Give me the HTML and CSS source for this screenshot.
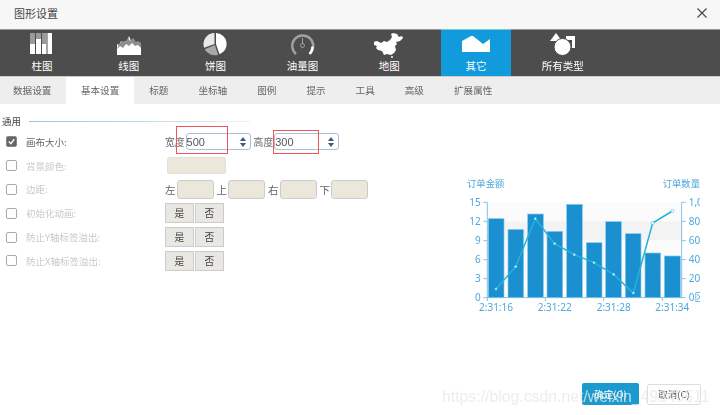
FILE: index.html
```html
<!DOCTYPE html>
<html lang="zh">
<head>
<meta charset="utf-8">
<title>图形设置</title>
<link rel="stylesheet" href="styles.css">
</head>
<body>
<div class="page">
  <header class="head"><span class="head-title">图形设置</span><svg class="close" viewBox="0 0 10 10"><path d="M.5.5l9 9M9.500.5l-9 9"/></svg></header>
  <nav class="types">
    <div class="type"><svg class="ti" viewBox="0 0 30 26"><path fill="#fff" d="M3 1h5v21H3zM9 1h5v21H9zM15 1h4.500v21H15zM20.500 1H25v21h-4.500z"/><path fill="#9a9a9a" d="M3 1h5v11H3zM9 1h5v6H9zM15 1h4.500v11H15z"/></svg><span>柱图</span></div>
    <div class="type"><svg class="ti" viewBox="0 0 30 26"><path fill="#fff" d="M3 23V12l2 1 2-4 2 3 2-3 2 1 2-6 2 5 2-2 2 4 2-1 2 3 2-1v11z"/><path fill="#8f8f8f" d="M3 17l3-3 3 2 3-4 3 2 3-3 3 3 3-1 3 3v-5l-3-2-2 1-3-4-3 3-2-3-3 4-3-1-3 3z"/></svg><span>线图</span></div>
    <div class="type"><svg class="ti" viewBox="0 0 30 26"><path fill="#fff" d="M15 1a11 11 0 0 1 3.500 21.300L15 12z"/><path fill="#a8a8a8" d="M13.800 13l3.400 9.700a11 11 0 0 1-13.500-5.400z"/><path fill="#e8e8e8" d="M13.500 1v11L3.100 15.700A11 11 0 0 1 13.500 1z"/></svg><span>饼图</span></div>
    <div class="type"><svg class="ti" viewBox="0 0 30 26"><path fill="none" stroke="#a0a0a0" stroke-width="2.400" d="M9 22a10.500 10.500 0 1 1 14 -.5"/><path fill="none" stroke="#fff" stroke-width="2.400" d="M25.500 14.500a10.500 10.500 0 0 1-3 7.500"/><circle cx="15.500" cy="13.500" r="2" fill="none" stroke="#a0a0a0"/><path stroke="#a0a0a0" d="M15.500 6v6"/></svg><span>油量图</span></div>
    <div class="type"><svg class="ti" viewBox="0 0 30 26"><path fill="#fff" d="M23 2l2 3 3-1 1 2-3 3-4 1 1 2-2 2 1 4-2 3-3 2-4-1-3 1-2-4-4-1-2-2 1-2-3-1-1-3 4-1 4 2 3-2 3 1 3-2 2-3-1-3 2-1z"/><circle cx="18" cy="25" r="1" fill="#fff"/></svg><span>地图</span></div>
    <div class="type active"><svg class="ti" viewBox="0 0 30 26"><path fill="#fff" d="M1 9L10 4h2l10 8 7-5v13H1z"/></svg><span>其它</span></div>
    <div class="type"><svg class="ti" viewBox="0 0 30 26"><path fill="#fff" d="M2 9l6-8 6 8zM18 4h9v12h-3V8h-6z"/><circle cx="14.500" cy="15" r="8.500" fill="#fff" stroke="#4d4d4d"/></svg><span>所有类型</span></div>
  </nav>
  <nav class="tabs">
    <span class="tab first">数据设置</span><span class="tab on">基本设置</span><span class="tab">标题</span><span class="tab">坐标轴</span><span class="tab">图例</span><span class="tab">提示</span><span class="tab">工具</span><span class="tab">高级</span><span class="tab">扩展属性</span>
  </nav>
  <main class="body">
    <section class="form">
      <div class="section"><b>通用</b><i></i></div>
      <div class="row"><span class="check on"><svg viewBox="0 0 10 10"><path d="M2 5l2.300 2.500L8 2.500"/></svg></span><label class="lbl dark">画布大小:</label>
        <div class="ctrl"><span>宽度</span><span class="spin"><em>500</em><u></u></span><span class="sp2">高度</span><span class="spin"><em>300</em><u></u></span></div></div>
      <div class="row"><span class="check"></span><label class="lbl">背景颜色:</label><div class="ctrl"><span class="color"></span></div></div>
      <div class="row"><span class="check"></span><label class="lbl">边距:</label><div class="ctrl gap3"><span>左</span><span class="num"></span><span>上</span><span class="num"></span><span>右</span><span class="num"></span><span>下</span><span class="num"></span></div></div>
      <div class="row"><span class="check"></span><label class="lbl">初始化动画:</label><div class="ctrl seg"><span>是</span><span>否</span></div></div>
      <div class="row"><span class="check"></span><label class="lbl">防止Y轴标签溢出:</label><div class="ctrl seg"><span>是</span><span>否</span></div></div>
      <div class="row"><span class="check"></span><label class="lbl">防止X轴标签溢出:</label><div class="ctrl seg"><span>是</span><span>否</span></div></div>
    </section>
    <svg class="chart" viewBox="0 0 750 450">
      <g class="bands"><rect x="112" y="97" width="583" height="57" fill="#fbfbfb"/><rect x="112" y="154" width="583" height="58" fill="#f3f3f3"/><rect x="112" y="212" width="583" height="57" fill="#fbfbfb"/><rect x="112" y="269" width="583" height="57" fill="#f8f8f8"/><rect x="112" y="326" width="583" height="57" fill="#fdfdfd"/></g>
      <g class="bars"><rect x="115" y="146" width="47" height="237"/><rect x="174" y="178" width="47" height="205"/><rect x="233" y="132" width="47" height="251"/><rect x="291" y="184" width="47" height="199"/><rect x="350" y="103" width="47" height="280"/><rect x="409" y="218" width="47" height="165"/><rect x="467" y="155" width="47" height="228"/><rect x="526" y="191" width="47" height="192"/><rect x="585" y="249" width="47" height="134"/><rect x="643" y="258" width="48" height="125"/></g>
      <polyline class="line" points="138,357 197,290 256,146 314,221 373,254 432,278 491,313 550,369 608,159 667,123"/>
      <g class="dots"><circle cx="138" cy="357" r="3.500"/><circle cx="197" cy="290" r="3.500"/><circle cx="256" cy="146" r="3.500"/><circle cx="314" cy="221" r="3.500"/><circle cx="373" cy="254" r="3.500"/><circle cx="432" cy="278" r="3.500"/><circle cx="491" cy="313" r="3.500"/><circle cx="550" cy="369" r="3.500"/><circle cx="608" cy="159" r="4.500"/><circle cx="667" cy="123" r="4.500"/></g>
      <path class="axis" d="M112 97v286M695 97v286M100 383h606M100 97h12M100 154h12M100 212h12M100 269h12M100 326h12M695 97h12M695 154h12M695 212h12M695 269h12M695 326h12M112 383v10M286 383v10M461 383v10M637 383v10"/>
      <g class="ct"><text x="51" y="52">订单金额</text><text x="638" y="52">订单数量</text></g>
      <g class="yl"><text x="92" y="107">15</text><text x="92" y="164">12</text><text x="92" y="221">9</text><text x="92" y="279">6</text><text x="92" y="336">3</text><text x="92" y="393">0</text></g>
      <g class="yr"><text x="716" y="107">1,000</text><text x="716" y="164">800</text><text x="716" y="221">600</text><text x="716" y="279">400</text><text x="716" y="336">200</text><text x="716" y="393">0区</text></g>
      <g class="xl"><text x="138" y="423">2:31:16</text><text x="314" y="423">2:31:22</text><text x="491" y="423">2:31:28</text><text x="667" y="423">2:31:34</text></g>
    </svg>
  </main>
  <footer class="foot"><span class="ok">确定(O)</span><span class="no">取消(C)</span></footer>
  <div class="mark m1"></div>
  <div class="mark m2"></div>
  <div class="wm">https://blog.csdn.net/weixin_49340511</div>
</div>
</body>
</html>
```
FILE: styles.css
```css
*{box-sizing:border-box}
html,body{margin:0;padding:0;background:#fff}
.page{position:relative;width:720px;height:415px;overflow:hidden;font-family:"Noto Sans CJK SC","Noto Sans",sans-serif;font-size:10px;color:#555;filter:blur(.35px)}
.head{height:29px;background:#f7f7f7;display:flex;align-items:center;justify-content:space-between;padding:0 13px 4px 14px}
.head-title{font-size:11px;color:#444}
.close{width:10px;height:10px;stroke:#444;stroke-width:1.100;fill:none}
.types{height:48px;background:#4d4d4d;border-top:1px solid #999;border-bottom:1px solid #ccc;display:flex;gap:16.8px;padding-left:7px}
.type{width:70px;display:flex;flex-direction:column;align-items:center;color:#fff;font-size:10.500px;line-height:13px}
.type.active{background:#119bdc;border-top:1px solid #7cc;margin-top:-1px;height:47px}
.ti{width:30px;height:26px;margin:2px 0 1px;flex:none}
.tabs{height:27px;background:#eee;display:flex;align-items:center}
.tab{padding:0 15px;line-height:26px;height:27px;font-size:9.600px;color:#666;white-space:nowrap}
.tab.first{padding-left:13px}
.tab.on{background:#fff;padding-left:14.500px}
.body{height:279px;display:flex;align-items:flex-start}
.form{width:450px;padding-left:2px}
.section{height:26px;padding-top:10px;display:flex;align-items:flex-start;gap:8px;font-size:9.500px;line-height:14px;color:#444}
.section b{font-weight:400}
.section i{width:221px;height:1px;margin-top:7px;background:linear-gradient(90deg,#9cc4df,#cfe2ee 70%,#eef4f8)}
.row{height:24px;display:flex;align-items:center;margin-top:-.2px;padding-left:4px}
.check{width:11px;height:11px;border:1px solid #aaa;border-radius:2px;background:#fff;flex:none;display:flex}
.check.on{background:#666;border-color:#888}
.check svg{width:9px;height:9px;fill:none;stroke:#fff;stroke-width:1.500}
.lbl{width:148px;padding-left:9px;color:#c9c9c9;font-size:9.500px;white-space:nowrap;flex:none}
.lbl.dark{color:#666}
.ctrl{display:flex;align-items:center;color:#666;font-size:9.800px}
.spin{width:65px;height:17px;border:1px solid #a9bfd6;border-radius:3px;margin-left:1px;position:relative;display:flex;align-items:center;background:#fff}
.spin em{font-style:normal;font-family:"Liberation Sans",sans-serif;font-size:11px;color:#555}
.spin u{position:absolute;right:4px;top:3px;width:0;height:0;border:3px solid transparent;border-top:none;border-bottom:4px solid #3c5a78}
.spin u:after{content:"";position:absolute;left:-3px;top:6px;border:3px solid transparent;border-bottom:none;border-top:4px solid #3c5a78}
.sp2{margin-left:3px}
.color{width:59px;height:17px;margin-left:2px;background:#ebe8db;border:1px solid #e4e2d8;border-radius:2px}
.gap3{gap:1px;font-size:10.500px}
.num{width:37px;height:19px;background:#ebe8db;border:1px solid #ccc;border-radius:3px;margin-right:2px}
.seg{gap:1px}
.seg span{width:29px;height:20px;line-height:18px;text-align:center;background:#e8e7e1;border:1px solid #ccc;color:#444}
.chart{width:250px;height:150px;margin:66px 0 0 0;flex:none}
.bars rect{fill:#1a90d0;stroke:#8cc8ea;stroke-width:2}
.line{fill:none;stroke:#25b4d8;stroke-width:4.500}
.dots circle{fill:#fff;stroke:#25b4d8;stroke-width:1.500}
.axis{fill:none;stroke:#6cb8e4;stroke-width:2.500}
.chart text{font-family:"Noto Sans","Noto Sans CJK SC",sans-serif;fill:#4ea8dc;font-size:29px}
.ct text{font-family:"Noto Sans CJK SC",sans-serif;font-size:28px}
.yl text{text-anchor:end;font-size:30px}
.yr text{font-size:30px}
.xl text{text-anchor:middle;font-size:30px}
.foot{height:32px;display:flex;align-items:flex-start;justify-content:flex-end;padding:0 19px 0 0;gap:8px;font-size:9.500px}
.ok{width:57px;height:22px;line-height:22px;text-align:center;background:#1b9ad0;color:#fff;border-radius:2px}
.no{width:54px;height:21px;margin-top:1px;line-height:19px;text-align:center;border:1px solid #ddd;border-radius:2px;color:#555}
.mark{position:absolute;border:1.500px solid #f0555a}
.m1{left:176px;top:126px;width:52px;height:28px}
.m2{left:273px;top:130px;width:46px;height:24px}
.wm{position:absolute;left:442px;top:385px;font-family:"Liberation Sans",sans-serif;font-size:15.800px;line-height:24px;color:rgba(232,232,232,.8);white-space:nowrap}
```
